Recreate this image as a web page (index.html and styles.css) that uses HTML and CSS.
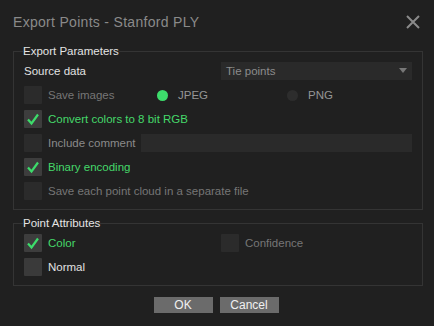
FILE: index.html
```html
<!DOCTYPE html>
<html>
<head>
<meta charset="utf-8">
<link rel="stylesheet" href="styles.css">
</head>
<body>
<div class="dialog">
  <div class="header">
    <span class="title">Export Points - Stanford PLY</span>
    <svg class="close" width="16" height="16" viewBox="0 0 16 16"><path d="M2 2 L14 14 M14 2 L2 14" stroke="#8a8a8a" stroke-width="2" fill="none"/></svg>
  </div>
  <fieldset class="group">
    <legend>Export Parameters</legend>
    <div class="row">
      <span class="label white src">Source data</span>
      <div class="select"><span>Tie points</span><svg width="8" height="6" viewBox="0 0 8 6"><path d="M0 0 H8 L4 5 Z" fill="#777"/></svg></div>
    </div>
    <div class="row">
      <span class="cb dis"></span><span class="label gray w-save">Save images</span>
      <span class="radio on"></span><span class="label light w-jpeg">JPEG</span>
      <span class="radio off"></span><span class="label light">PNG</span>
    </div>
    <div class="row">
      <span class="cb on"><svg width="18" height="18" viewBox="0 0 18 18"><path d="M4 9.5 L7.5 13.5 L14 4.5" stroke="#3ddc6b" stroke-width="2.2" fill="none"/></svg></span><span class="label green">Convert colors to 8 bit RGB</span>
    </div>
    <div class="row">
      <span class="cb dis"></span><span class="label gray2 w-inc">Include comment</span>
      <div class="input"></div>
    </div>
    <div class="row">
      <span class="cb on"><svg width="18" height="18" viewBox="0 0 18 18"><path d="M4 9.5 L7.5 13.5 L14 4.5" stroke="#3ddc6b" stroke-width="2.2" fill="none"/></svg></span><span class="label green">Binary encoding</span>
    </div>
    <div class="row">
      <span class="cb dis"></span><span class="label gray">Save each point cloud in a separate file</span>
    </div>
  </fieldset>
  <fieldset class="group g2">
    <legend>Point Attributes</legend>
    <div class="row">
      <span class="cb on"><svg width="18" height="18" viewBox="0 0 18 18"><path d="M4 9.5 L7.5 13.5 L14 4.5" stroke="#3ddc6b" stroke-width="2.2" fill="none"/></svg></span><span class="label green w-color">Color</span>
      <span class="cb dis"></span><span class="label gray">Confidence</span>
    </div>
    <div class="row">
      <span class="cb"></span><span class="label white">Normal</span>
    </div>
  </fieldset>
  <div class="buttons">
    <button class="btn">OK</button>
    <button class="btn">Cancel</button>
  </div>
</div>
</body>
</html>
```
FILE: styles.css
```css
html, body {
  margin: 0;
  padding: 0;
  background: #202020;
  width: 434px;
  height: 326px;
  overflow: hidden;
}
.dialog {
  font-family: "Liberation Sans", Arial, sans-serif;
  font-size: 11.5px;
  color: #dcdcdc;
}
.header {
  height: 43px;
  display: flex;
  align-items: center;
  justify-content: space-between;
  padding: 0 13px 0 13px;
  box-sizing: border-box;
}
.title {
  font-size: 14px;
  letter-spacing: 0.3px;
  color: #8a8a8a;
  margin-top: 1px;
}
.close {
  margin-top: 1px;
}
.group {
  margin: 0 11px 0 13px;
  padding: 3px 10px 9px 10px;
  border: 1px solid #343434;
  min-width: 0;
}
.group legend {
  padding: 0;
  margin-left: -1px;
  height: 16px;
  line-height: 16px;
  font-size: 11.5px;
  color: #e4e4e4;
}
.g2 {
  margin-top: 5px;
}
.row {
  display: flex;
  align-items: center;
  height: 18px;
  margin-bottom: 6px;
}
.row:last-child {
  margin-bottom: 0;
}
.label {
  white-space: nowrap;
}
.src {
  width: 197px;
}
.white { color: #e2e2e2; }
.gray { color: #767676; }
.gray2 { color: #8a8a8a; }
.light { color: #959595; }
.green { color: #45d86a; }
.cb {
  width: 18px;
  height: 18px;
  background: #3a3a3a;
  border-radius: 1px;
  margin-right: 6px;
  flex: none;
  display: block;
}
.cb svg { display: block; }
.cb.dis { background: #2b2b2b; }
.cb.on { background: #3d3d3d; }
.w-save { width: 109px; }
.w-jpeg { width: 109px; }
.w-inc { width: 93px; }
.w-color { width: 173px; }
.radio {
  width: 11px;
  height: 11px;
  border-radius: 50%;
  margin-right: 10px;
  flex: none;
}
.radio.on { background: #3ddc6b; }
.radio.off { background: #2d2d2d; }
.select {
  flex: 1;
  height: 18px;
  background: #2a2a2a;
  display: flex;
  align-items: center;
  justify-content: space-between;
  padding: 0 5px 0 5px;
  color: #8c8c8c;
}
.input {
  flex: 1;
  height: 18px;
  background: #2a2a2a;
}
.buttons {
  display: flex;
  justify-content: center;
  gap: 7px;
  margin-top: 11px;
  padding-right: 2px;
}
.btn {
  width: 59px;
  height: 16px;
  padding: 0;
  border: none;
  background: #6b6b6b;
  color: #f0f0f0;
  font-family: "Liberation Sans", Arial, sans-serif;
  font-size: 12px;
  line-height: 16px;
}
```
